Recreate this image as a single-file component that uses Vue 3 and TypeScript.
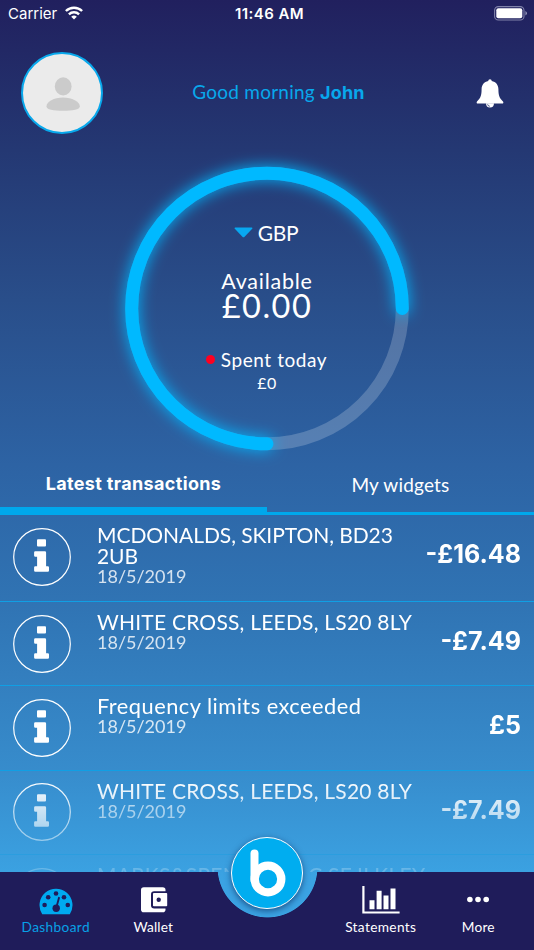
<script setup lang="ts">
interface Transaction {
  title: string
  date: string
  amount: string
  size: string
  tracking: string
}

const transactions: Transaction[] = [
  { title: 'MCDONALDS, SKIPTON, BD23 2UB', date: '18/5/2019', amount: '-£16.48', size: '21px', tracking: '-0.06px' },
  { title: 'WHITE CROSS, LEEDS, LS20 8LY', date: '18/5/2019', amount: '-£7.49', size: '21px', tracking: '0.22px' },
  { title: 'Frequency limits exceeded', date: '18/5/2019', amount: '£5', size: '21.8px', tracking: '0.48px' },
  { title: 'WHITE CROSS, LEEDS, LS20 8LY', date: '18/5/2019', amount: '-£7.49', size: '21px', tracking: '0.22px' },
  { title: 'MARKS&SPENCER PLC SF ILKLEY', date: '', amount: '', size: '21px', tracking: '0.28px' },
]
</script>

<template>
  <div class="screen">
    <div class="status">
      <div class="carrier">
        <span>Carrier</span>
        <svg width="18" height="14" viewBox="0 0 18 14" fill="none" stroke="#fff" stroke-width="2.4">
          <path d="M.9 5a11.6 11.6 0 0 1 16.2 0" />
          <path d="M3.9 8.3a7.3 7.3 0 0 1 10.2 0" />
          <path d="M9 13.6 6.2 10.8a4 4 0 0 1 5.6 0z" fill="#fff" stroke="none" />
        </svg>
      </div>
      <span class="clock">11:46 AM</span>
      <svg class="battery" width="34" height="15" viewBox="0 0 34 15">
        <rect x=".6" y=".6" width="29.4" height="13.4" rx="3.8" fill="none" stroke="#8082aa" stroke-width="1.1" />
        <rect x="2.3" y="2.3" width="26" height="10" rx="2" fill="#fff" />
        <path d="M31.4 5v4.6q1.6-.8 1.6-2.3t-1.6-2.3z" fill="#8f90b4" />
      </svg>
    </div>

    <header class="header">
      <div class="avatar">
        <svg width="34" height="34" viewBox="0 0 34 34" fill="#cbcbcb">
          <ellipse cx="17.2" cy="9.4" rx="8.4" ry="9.1" />
          <path d="M.5 29.2C.5 24.8 8 20.6 17 20.6s16.8 4.2 16.8 8.6c0 3.4-7 4.5-16.800 4.500S.5 32.600.5 29.200z" />
        </svg>
      </div>
      <div class="greeting"><span>Good morning</span><b>John</b></div>
      <svg class="bell" width="28" height="30" viewBox="0 0 28 30">
        <path d="M14 .2c1 0 1.700.7 1.700 1.800 4.300.8 6.600 3.900 6.700 8 .1 6.100.6 8.600 4.600 12.400.7.900.4 2.200-.8 2.200H1.800c-1.200 0-1.500-1.300-.8-2.200 4-3.800 4.500-6.300 4.600-12.400.1-4.100 2.400-7.200 6.700-8C12.300.9 13 .2 14 .2z" fill="#fff" />
        <path d="M10 24.300h8a4 4.200 0 0 1-8 0z" fill="#fff" />
        <path d="M11.600 25.300a2.500 2.300 0 0 0 2.200 2" fill="none" stroke="#24316d" stroke-width=".8" />
      </svg>
    </header>

    <section class="gauge">
      <svg class="ring" width="350" height="320" viewBox="-175 -160.500 350 320" fill="none" stroke-width="13">
        <defs>
          <filter id="glow" x="-20%" y="-20%" width="140%" height="140%">
            <feGaussianBlur stdDeviation="7.500" />
          </filter>
        </defs>
        <circle r="135.300" stroke="#fff" stroke-opacity=".2" />
        <path d="M135.300 0A135.300 135.300 0 1 0 0 135.300" stroke="#00b8ff" stroke-linecap="round" filter="url(#glow)" />
        <path d="M135.300 0A135.300 135.300 0 1 0 0 135.300" stroke="#00b9ff" stroke-linecap="round" />
      </svg>
      <div class="readout">
        <div class="currency">
          <svg width="19" height="11" viewBox="0 0 19 11"><path d="M1.200.4h16.600q1.200.4.400 1.300l-7.600 8q-1.100 1-2.200 0l-7.600-8Q0 .8 1.200.4z" fill="#08a8f0" /></svg>
          <span>GBP</span>
        </div>
        <div class="available">Available</div>
        <div class="balance">£0.00</div>
        <div class="spent"><i class="dot"></i><span>Spent today</span></div>
        <div class="spent-value">£0</div>
      </div>
    </section>

    <nav class="tabs">
      <div class="tab active">Latest transactions</div>
      <div class="tab">My widgets</div>
    </nav>

    <main class="list">
      <article v-for="(t, i) in transactions" :key="i" class="row">
        <svg class="info" width="58" height="58" viewBox="0 0 58 58">
          <circle cx="29" cy="29" r="28.300" fill="none" stroke="#fff" stroke-width="1.200" />
          <g fill="#fff">
            <rect x="24" y="11.300" width="9" height="7.200" rx="1" />
            <path d="M22.300 23.300h9.600q1.200 0 1.200 1.200v13.800h1.700q1.200 0 1.200 1.200v3q0 1.200-1.200 1.200H22.300q-1.200 0-1.200-1.200v-3q0-1.200 1.200-1.200h1.800v-9.600h-1.800q-1.200 0-1.200-1.200v-3q0-1.200 1.200-1.200z" />
          </g>
        </svg>
        <div class="details">
          <div class="title" :style="{ fontSize: t.size, letterSpacing: t.tracking }">{{ t.title }}</div>
          <div v-if="t.date" class="date">{{ t.date }}</div>
        </div>
        <div v-if="t.amount" class="amount">{{ t.amount }}</div>
      </article>
    </main>

    <footer class="bar">
      <div class="group">
        <div class="item current">
          <svg width="40" height="30" viewBox="0 0 40 30">
            <path d="M6.200 28.200A16.500 16.500 0 1 1 33.800 28.200z" fill="#00aaf0" />
            <g fill="#1f1c5a">
              <circle cx="8.600" cy="19" r="2.300" /><circle cx="12.200" cy="11.200" r="2.300" /><circle cx="20" cy="7.500" r="2.300" />
              <circle cx="28" cy="11.200" r="2.300" /><circle cx="31.800" cy="19" r="2.300" /><circle cx="20.200" cy="22.200" r="3.700" />
            </g>
            <path d="M20.500 21 23 11.800" stroke="#1f1c5a" stroke-width="1.900" stroke-linecap="round" />
          </svg>
          <span>Dashboard</span>
        </div>
        <div class="item">
          <svg width="40" height="30" viewBox="0 0 40 30">
            <rect x="8" y="1.200" width="24.500" height="25" rx="2.800" fill="#fff" />
            <path d="M34.500 5.200H21.200q-3.200 0-3.200 3.200v10.800q0 3.200 3.200 3.200h13.300z" fill="#1f1c5a" />
            <rect x="20" y="7" width="14.200" height="13.200" rx=".8" fill="#fff" />
            <circle cx="25.700" cy="13.700" r="2.200" fill="#1f1c5a" />
          </svg>
          <span>Wallet</span>
        </div>
      </div>
      <div class="group">
        <div class="item statements">
          <svg width="40" height="30" viewBox="0 0 40 30">
            <path d="M2.400 0v26.500h36.200" fill="none" stroke="#fff" stroke-width="2.200" />
            <path d="M8.500 14.300h5v9h-5zM15.600 4.800h5v18.500h-5zM22.500 9.500h5v13.800h-5zM29.500 2.400h5v20.900h-5z" fill="#fff" />
          </svg>
          <span>Statements</span>
        </div>
        <div class="item">
          <svg width="40" height="30" viewBox="0 0 40 30" fill="#fff">
            <circle cx="11.900" cy="13.500" r="2.800" /><circle cx="20" cy="13.500" r="2.800" /><circle cx="28.200" cy="13.500" r="2.800" />
          </svg>
          <span>More</span>
        </div>
      </div>
      <div class="fab">
        <svg width="70" height="70" viewBox="0 0 70 70" fill="none" stroke="#fff">
          <path d="M22.500 15.500V42" stroke-width="8" stroke-linecap="round" />
          <circle cx="36" cy="41" r="13.300" stroke-width="8.300" />
        </svg>
      </div>
    </footer>
  </div>
</template>

<style>
body {
  margin: 0;
}
</style>

<style scoped>
.screen {
  position: relative;
  display: flex;
  flex-direction: column;
  width: 534px;
  height: 950px;
  overflow: hidden;
  color: #fff;
  font-family: Lato, 'Open Sans', sans-serif;
  background: linear-gradient(to bottom, #21205e 0, #243873 150px, #294e8a 300px, #2d63a4 465px, #3074b4 605px, #378ccc 770px, #3ba3e3 880px);
}
.status {
  display: grid;
  grid-template-columns: 1fr auto 1fr;
  align-items: center;
  height: 28px;
  padding: 0 6px 0 8px;
  font: 400 15px/28px Inter, sans-serif;
}
.carrier {
  display: flex;
  align-items: center;
  gap: 7px;
}
.carrier svg {
  margin: -2px 0 0 1px;
}
.clock {
  padding-left: 3px;
  font-weight: 600;
  letter-spacing: 0.43px;
}
.battery {
  justify-self: end;
  margin-top: -2px;
}
.header {
  display: flex;
  align-items: center;
  justify-content: space-between;
  height: 130px;
  padding: 0 30px 0 21px;
}
.avatar {
  display: flex;
  align-items: center;
  justify-content: center;
  box-sizing: border-box;
  width: 82px;
  height: 82px;
  padding: 2px 0 0 1px;
  border: 2px solid #08a8ec;
  border-radius: 50%;
  background: #ebebeb;
}
.greeting {
  display: flex;
  align-items: baseline;
  gap: 5px;
  margin: -4px 0 0 -22px;
  color: #08a8ec;
  font-size: 19px;
  letter-spacing: 0.250px;
}
.greeting b {
  font: 700 18px Inter, sans-serif;
  letter-spacing: 0.200px;
}
.bell {
  margin-top: 2px;
}
.gauge {
  display: grid;
  justify-items: center;
  height: 307px;
  margin-top: -10px;
}
.ring,
.readout {
  grid-area: 1 / 1;
}
.readout {
  display: flex;
  flex-direction: column;
  align-items: center;
  padding-top: 72px;
}
.currency,
.spent {
  display: flex;
  align-items: center;
  height: 24px;
}
.currency {
  gap: 5px;
  margin: 0 2px 25px 0;
  font-size: 21px;
  letter-spacing: -0.300px;
}
.available {
  font-size: 21.500px;
  line-height: 24px;
  letter-spacing: 0.760px;
}
.balance {
  margin: -4px 0 24px;
  font-size: 32.500px;
  line-height: 34px;
  letter-spacing: 1.500px;
}
.spent {
  gap: 6px;
  margin-left: -1px;
  font-size: 19px;
  letter-spacing: 0.570px;
}
.dot {
  width: 9px;
  height: 9px;
  border-radius: 50%;
  background: #ff0020;
}
.spent-value {
  margin-top: 2px;
  font-size: 16px;
  line-height: 20px;
  letter-spacing: 0.500px;
}
.tabs {
  display: flex;
  height: 60px;
}
.tab {
  box-sizing: border-box;
  width: 267px;
  padding-top: 18px;
  border-bottom: 3px solid #00a8ec;
  text-align: center;
  font-size: 19px;
  line-height: 24px;
  letter-spacing: 0.200px;
}
.tab.active {
  padding-top: 16.500px;
  border-bottom-width: 8px;
  font: 700 18px/24px Inter, sans-serif;
  letter-spacing: 0.350px;
}
.list {
  height: 357px;
  overflow: hidden;
  -webkit-mask-image: linear-gradient(to bottom, #000 265px, rgba(0, 0, 0, 0.2) 357px);
  mask-image: linear-gradient(to bottom, #000 265px, rgba(0, 0, 0, 0.2) 357px);
}
.row {
  display: flex;
  align-items: flex-start;
  box-sizing: border-box;
  height: 84.330px;
  padding: 0 14px 0 13px;
  border-bottom: 1px solid #109fe4;
}
.row:first-child {
  height: 87px;
}
.info {
  flex: none;
  margin: 12.700px 26px 0 0;
}
.details {
  width: 330px;
  padding-top: 9px;
}
.title {
  width: 330px;
  line-height: 21px;
}
.row:first-child .title {
  width: 310px;
}
.date {
  font-size: 18px;
  line-height: 20px;
  opacity: 0.8;
}
.amount {
  flex: 1;
  margin: 24px -1px 0 -40px;
  text-align: right;
  white-space: nowrap;
  font: 700 25px/30px Inter, sans-serif;
}
.bar {
  position: relative;
  display: flex;
  justify-content: space-between;
  box-sizing: border-box;
  height: 78px;
  padding: 14px 7px 0;
  background: radial-gradient(circle at 267.500px -4.500px, transparent 49.500px, #1f1c5a 50.300px);
}
.group {
  display: flex;
}
.item {
  display: flex;
  flex-direction: column;
  align-items: center;
  width: 97.500px;
  font-size: 13.700px;
  line-height: 20px;
  letter-spacing: 0.150px;
}
.item span {
  margin-top: 1px;
}
.item.current {
  color: #08a0e6;
}
.item.statements,
.item.current {
  letter-spacing: 0.350px;
}
.fab {
  position: absolute;
  left: 231px;
  top: -35px;
  width: 70px;
  height: 70px;
  border: 1.500px solid #fff;
  border-radius: 50%;
  background: #00adf0;
  box-shadow: 0 2px 6px rgba(10, 40, 90, 0.65);
}
.fab svg {
  display: block;
}
</style>
